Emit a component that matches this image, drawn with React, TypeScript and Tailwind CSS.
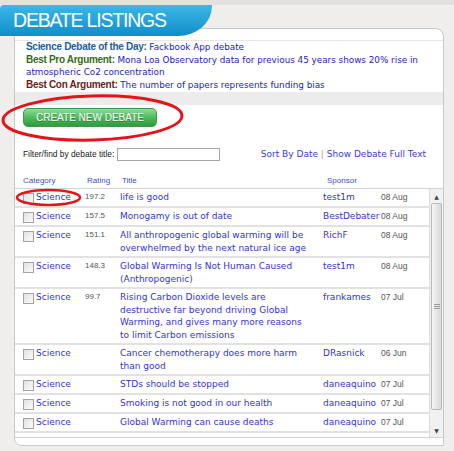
const rows = [
  { rating: "197.2", title: ["life is good"], sponsor: "test1m", date: "08 Aug" },
  { rating: "157.5", title: ["Monogamy is out of date"], sponsor: "BestDebater", date: "08 Aug" },
  {
    rating: "151.1",
    title: ["All anthropogenic global warming will be", "overwhelmed by the next natural ice age"],
    sponsor: "RichF",
    date: "08 Aug",
  },
  {
    rating: "148.3",
    title: ["Global Warming Is Not Human Caused", "(Anthropogenic)"],
    sponsor: "test1m",
    date: "08 Aug",
  },
  {
    rating: "99.7",
    title: [
      "Rising Carbon Dioxide levels are",
      "destructive far beyond driving Global",
      "Warming, and gives many more reasons",
      "to limit Carbon emissions",
    ],
    sponsor: "frankames",
    date: "07 Jul",
  },
  {
    rating: "",
    title: ["Cancer chemotherapy does more harm", "than good"],
    sponsor: "DRasnick",
    date: "06 Jun",
  },
  { rating: "", title: ["STDs should be stopped"], sponsor: "daneaquino", date: "07 Jul" },
  { rating: "", title: ["Smoking is not good in our health"], sponsor: "daneaquino", date: "07 Jul" },
  { rating: "", title: ["Global Warming can cause deaths"], sponsor: "daneaquino", date: "07 Jul" },
  { rating: "", title: ["Can Cancer be treated in the future?"], sponsor: "jsiva", date: "07 Jul" },
];

const grid = "grid grid-cols-[62px_35px_203px_58px_1fr] pl-[8px]";
const label = "font-['Liberation_Sans',sans-serif] text-[10px] font-bold tracking-[-0.3px]";

function Checkbox() {
  return (
    <span className="mt-[2px] block h-[11px] w-[11px] shrink-0 border border-[#a3a3a3] bg-gradient-to-br from-[#e2e2e2] to-[#fbfbfb]" />
  );
}

export default function App() {
  return (
    <div className="relative h-[451px] w-[454px] overflow-hidden bg-[#efeeed] font-['DejaVu_Sans',sans-serif]">
      <div className="h-[5px] bg-[#e3e2e0]" />

      {/* header tab */}
      <div className="relative z-10 flex h-[31px] w-[212px] items-center rounded-tl-[4px] rounded-br-[34px_30px] bg-gradient-to-b from-[#3ab8e6] to-[#0b8eca] pl-[13px]">
        <span className="font-['Liberation_Sans',sans-serif] text-[19.5px] leading-none tracking-[-1.2px] text-white">
          DEBATE LISTINGS
        </span>
      </div>

      <div className="-mt-[8px] ml-[14px] w-[430px] rounded-tr-[8px] rounded-bl-[8px] border border-[#c9c9c9] bg-[#ececec]">
        {/* featured box */}
        <div className="h-[63px] rounded-tr-[8px] bg-white">
          <div className="h-[11px]" />
          <div className="border-t border-[#e6e6e6] pl-[11px] text-[8.8px] leading-[12.7px] text-[#2222cc]">
            <p>
              <span className={`${label} text-[#1d5c97]`}>Science Debate of the Day:</span> Fackbook App debate
            </p>
            <p>
              <span className={`${label} text-[#386b1c]`}>Best Pro Argument:</span> Mona Loa Observatory data for
              previous 45 years shows 20% rise in
              <br />
              atmospheric Co2 concentration
            </p>
            <p>
              <span className={`${label} text-[#6e1c1c]`}>Best Con Argument:</span> The number of papers represents
              funding bias
            </p>
          </div>
        </div>

        {/* listings */}
        <div className="mt-[13px] rounded-bl-[7px] bg-white pb-[7px] pt-[3px]">
          <div className="pl-[8px]">
            <button className="flex h-[19px] w-[134px] items-center justify-center rounded-[5px] border border-[#3b9b47] bg-gradient-to-b from-[#8fdc98] via-[#4fba5c] to-[#2f9a3e] font-['Liberation_Sans',sans-serif] text-[10px] text-white [text-shadow:0_1px_0_rgba(0,80,0,0.4)]">
              CREATE NEW DEBATE
            </button>
          </div>

          <div className="mt-[21px] flex h-[13px] items-center pl-[8px] pr-[17px]">
            <span className="font-['Liberation_Sans',sans-serif] text-[8.4px] text-[#222]">
              Filter/find by debate title:
            </span>
            <span className="ml-[3px] h-[13px] w-[103px] border border-[#a6a6a6] bg-white" />
            <span className="ml-auto text-[9px] text-[#3a3ae0]">
              Sort By Date <span className="text-[#c9a071]">|</span> Show Debate Full Text
            </span>
          </div>

          <div className={`${grid} mt-[13px] h-[14px] items-center font-['Liberation_Sans',sans-serif] text-[8px] text-[#3c4fd6]`}>
            <span>Category</span>
            <span className="pl-[2px]">Rating</span>
            <span className="pl-[2px]">Title</span>
            <span className="pl-[4px]">Sponsor</span>
            <span />
          </div>

          <div className="flex h-[250px] border-y border-[#d2d2d2]">
            <div className="flex-1 overflow-hidden">
              {rows.map((r, i) => (
                <div
                  key={i}
                  className={`${grid} border-b-2 border-[#e2e2e2] pb-[2px] pt-[2px] leading-[12.5px]`}
                >
                  <div className="flex gap-[2px]">
                    <Checkbox />
                    <span className="text-[9px] text-[#3434d6]">Science</span>
                  </div>
                  <span className="font-['Liberation_Sans',sans-serif] text-[8px] text-[#555]">{r.rating}</span>
                  <div className="text-[9px] text-[#3434d6]">
                    {r.title.map((t, j) => (
                      <div key={j} className="whitespace-nowrap">
                        {t}
                      </div>
                    ))}
                  </div>
                  <span className="text-[9px] text-[#3434d6]">{r.sponsor}</span>
                  <span className="font-['Liberation_Sans',sans-serif] text-[8.5px] text-[#555]">{r.date}</span>
                </div>
              ))}
            </div>

            {/* scrollbar */}
            <div className="flex w-[14px] flex-col border-l border-[#dcdcdc] bg-[#f1f1f1]">
              <div className="flex h-[14px] items-center justify-center text-[6px] text-[#444]">▲</div>
              <div className="mx-[1px] flex h-[207px] items-center justify-center rounded-[2px] border border-[#b9b9b9] bg-gradient-to-r from-[#f6f6f6] to-[#d9d9d9]">
                <div className="flex w-[6px] flex-col gap-[1px]">
                  <span className="h-px bg-[#9a9a9a]" />
                  <span className="h-px bg-[#9a9a9a]" />
                  <span className="h-px bg-[#9a9a9a]" />
                </div>
              </div>
              <div className="flex-1" />
              <div className="flex h-[14px] items-center justify-center text-[6px] text-[#444]">▼</div>
            </div>
          </div>
        </div>
      </div>

      {/* red marker circles */}
      <svg className="pointer-events-none absolute left-0 top-0 z-20" width="454" height="451" viewBox="0 0 454 451">
        <ellipse cx="92.5" cy="118" rx="89.5" ry="22" fill="none" stroke="#e5141b" strokeWidth="3" transform="rotate(-1.5 92.5 118)" />
        <ellipse cx="48.5" cy="197.5" rx="31.5" ry="7.5" fill="none" stroke="#e5141b" strokeWidth="2.5" />
      </svg>
    </div>
  );
}
